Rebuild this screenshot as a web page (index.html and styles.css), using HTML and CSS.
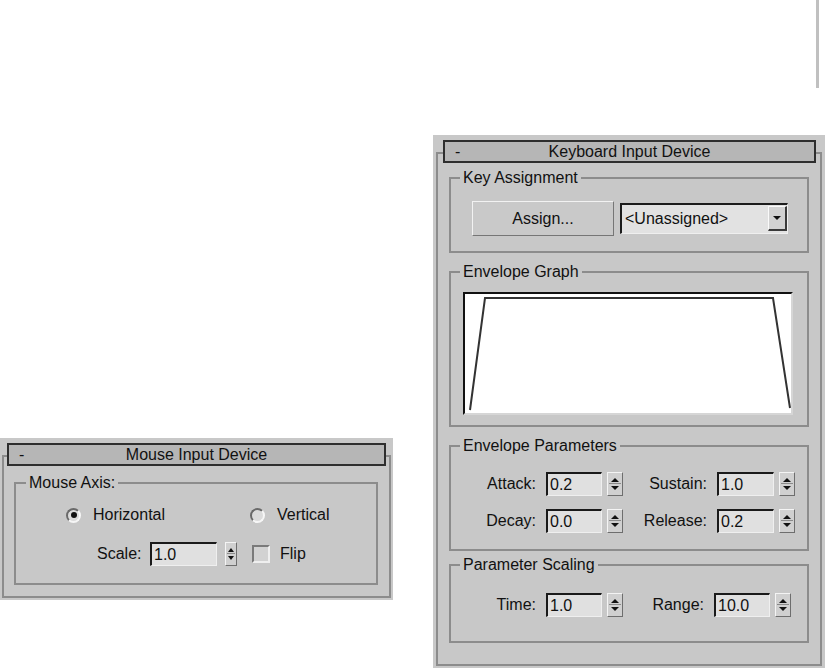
FILE: index.html
```html
<!DOCTYPE html>
<html>
<head>
<meta charset="utf-8">
<title>Input Devices</title>
<link rel="stylesheet" href="styles.css">
</head>
<body>
<div class="desk">
  <div class="edge"></div>

  <section class="rollout kb">
    <div class="frame">
      <div class="head"><span class="dash">-</span><span class="title">Keyboard Input Device</span><span></span></div>

      <fieldset class="group g-key">
        <legend>Key Assignment</legend>
        <div class="key-row">
          <div class="btn">Assign...</div>
          <div class="combo"><span class="combo-text">&lt;Unassigned&gt;</span><span class="combo-arrow"><i class="tri-down"></i></span></div>
        </div>
      </fieldset>

      <fieldset class="group g-graph">
        <legend>Envelope Graph</legend>
        <div class="graph">
          <svg class="graph-svg" width="326" height="119"><polyline points="5,116 20,4 308,4 325,114" fill="none" stroke="#333" stroke-width="2"/></svg>
        </div>
      </fieldset>

      <fieldset class="group g-params">
        <legend>Envelope Parameters</legend>
        <div class="params">
          <div class="prow">
            <div class="param"><span class="lbl">Attack:</span><span class="field">0.2</span><span class="spin"><i class="tri-up"></i><i class="tri-down"></i></span></div>
            <div class="param"><span class="lbl">Sustain:</span><span class="field wide">1.0</span><span class="spin"><i class="tri-up"></i><i class="tri-down"></i></span></div>
          </div>
          <div class="prow">
            <div class="param"><span class="lbl">Decay:</span><span class="field">0.0</span><span class="spin"><i class="tri-up"></i><i class="tri-down"></i></span></div>
            <div class="param"><span class="lbl">Release:</span><span class="field wide">0.2</span><span class="spin"><i class="tri-up"></i><i class="tri-down"></i></span></div>
          </div>
        </div>
      </fieldset>

      <fieldset class="group g-scale">
        <legend>Parameter Scaling</legend>
        <div class="params scale">
          <div class="prow">
            <div class="param"><span class="lbl">Time:</span><span class="field">1.0</span><span class="spin"><i class="tri-up"></i><i class="tri-down"></i></span></div>
            <div class="param"><span class="lbl">Range:</span><span class="field">10.0</span><span class="spin"><i class="tri-up"></i><i class="tri-down"></i></span></div>
          </div>
        </div>
      </fieldset>
    </div>
  </section>

  <section class="rollout mouse">
    <div class="frame">
      <div class="head"><span class="dash">-</span><span class="title">Mouse Input Device</span><span></span></div>
      <fieldset class="group g-axis">
        <legend>Mouse Axis:</legend>
        <div class="axis-row">
          <label class="opt"><span class="radio on"></span><span>Horizontal</span></label>
          <label class="opt"><span class="radio"></span><span>Vertical</span></label>
        </div>
        <div class="scale-row">
          <span class="slbl">Scale:</span><span class="field sfield">1.0</span><span class="spin small"><i class="tri-up"></i><i class="tri-down"></i></span>
          <span class="check"></span><span class="flip">Flip</span>
        </div>
      </fieldset>
    </div>
  </section>
</div>
</body>
</html>
```
FILE: styles.css
```css
* { box-sizing: border-box; }

body {
  margin: 0;
  background: #fff;
  font-family: "Liberation Sans", Arial, sans-serif;
  font-size: 16px;
  color: #111;
}

.desk {
  position: relative;
  width: 825px;
  height: 671px;
  overflow: hidden;
}

.edge {
  position: absolute;
  left: 816px;
  top: 0;
  width: 3px;
  height: 88px;
  background: #c0c0c0;
}

.rollout {
  position: absolute;
  background: #c8c8c8;
}

.kb {
  left: 433px;
  top: 135px;
  width: 392px;
  height: 533px;
  padding: 17px 3px 2px 3px;
}

.mouse {
  left: 0;
  top: 438px;
  width: 393px;
  height: 162px;
  padding: 17px 2px 2px 2px;
}

.frame {
  border: 2px solid #8c8c8c;
  height: 100%;
}

.head {
  height: 23px;
  margin: -14px 4px 0 5px;
  background: #b6b6b6;
  border: 2px solid #2e2e2e;
  display: grid;
  grid-template-columns: 1fr auto 1fr;
  align-items: center;
  line-height: 19px;
}

.mouse .head { margin: -14px 3px 0 3px; }

.dash { padding-left: 10px; }

.group {
  margin: 0 11px;
  border: 2px solid #8c8c8c;
  padding: 0;
  min-width: 0;
}

.group legend {
  padding: 0 3px;
  margin-left: 9px;
  line-height: 18px;
  height: 18px;
}

/* Key assignment */
.g-key { margin-top: 6px; }

.key-row {
  display: flex;
  align-items: flex-start;
  gap: 6px;
  padding: 14px 0 15px 21px;
}

.btn {
  width: 142px;
  height: 35px;
  border: 1px solid;
  border-color: #f2f2f2 #767676 #767676 #f2f2f2;
  background: #c9c9c9;
  display: flex;
  align-items: center;
  justify-content: center;
}

.combo {
  margin-top: 2px;
  width: 168px;
  height: 31px;
  background: #e2e2e2;
  border-style: solid;
  border-width: 2px 1px 1px 2px;
  border-color: #1c1c1c #efefef #efefef #1c1c1c;
  display: flex;
  align-items: flex-start;
}

.combo-text {
  flex: 1;
  padding-left: 3px;
  line-height: 27px;
}

.combo-arrow {
  margin-top: 1px;
  width: 19px;
  height: 25px;
  background: #d2d2d2;
  border-style: solid;
  border-width: 1px 2px 2px 1px;
  border-color: #fafafa #3a3a3a #3a3a3a #fafafa;
  display: flex;
  align-items: center;
  justify-content: center;
}

.tri-up, .tri-down {
  display: block;
  width: 0;
  height: 0;
  border-left: 4px solid transparent;
  border-right: 4px solid transparent;
}
.tri-up { border-bottom: 4px solid #111; }
.tri-down { border-top: 4px solid #111; }

/* Graph */
.g-graph { margin-top: 10px; }

.graph {
  margin: 11px 14px 10px 12px;
  height: 123px;
  background: #fff;
  border: 2px solid;
  border-color: #111 #d6d6d6 #d6d6d6 #111;
}

.graph-svg { display: block; }

/* Parameters */
.g-params { margin-top: 10px; }
.g-scale { margin-top: 5px; }

.params {
  display: flex;
  flex-direction: column;
  gap: 13px;
  padding: 17px 0 16px 15px;
}

.params.scale { padding: 19px 0 24px 15px; }

.prow { display: flex; align-items: center; }

.param { display: flex; align-items: center; }
.param + .param { margin-left: 14px; }
.scale .param + .param { margin-left: 11px; }

.lbl {
  width: 70px;
  text-align: right;
  margin-right: 10px;
}

.field {
  width: 56px;
  height: 24px;
  background: #e0e0e0;
  border-style: solid;
  border-width: 2px 1px 1px 2px;
  border-color: #1a1a1a #efefef #efefef #1a1a1a;
  padding-left: 2px;
  line-height: 21px;
}
.field.wide { width: 57px; }

.spin {
  width: 16px;
  height: 24px;
  margin-left: 5px;
  background: #d0d0d0;
  border: 1px solid;
  border-color: #f4f4f4 #6e6e6e #6e6e6e #f4f4f4;
  display: flex;
  flex-direction: column;
  align-items: center;
  justify-content: space-evenly;
  position: relative;
}

.spin::after {
  content: "";
  position: absolute;
  left: 1px;
  right: 1px;
  top: 10px;
  height: 1px;
  background: #8a8a8a;
}

/* Mouse */
.g-axis {
  margin: 8px 11px 0 10px;
}
.g-axis legend { margin-left: 10px; }

.axis-row {
  display: grid;
  grid-template-columns: 184px auto;
  padding: 14px 0 0 50px;
  height: 32px;
  align-items: start;
}

.opt {
  display: flex;
  align-items: center;
  gap: 12px;
  height: 18px;
}

.radio {
  flex: none;
  width: 15px;
  height: 15px;
  border-radius: 50%;
  border: 2px solid;
  border-color: #6a6a6a #f6f6f6 #f6f6f6 #6a6a6a;
  background: #dcdcdc;
  display: flex;
  align-items: center;
  justify-content: center;
}

.radio.on::after {
  content: "";
  width: 6px;
  height: 6px;
  border-radius: 50%;
  background: #111;
}

.scale-row {
  display: flex;
  align-items: center;
  padding: 18px 0 17px 81px;
}

.slbl { margin-right: 8px; width: 45px; }

.sfield { width: 67px; }

.spin.small {
  width: 12px;
  margin-left: 8px;
}
.spin.small .tri-up, .spin.small .tri-down {
  border-left-width: 3px;
  border-right-width: 3px;
}

.check {
  width: 18px;
  height: 18px;
  margin-left: 15px;
  background: #d2d2d2;
  border: 2px solid;
  border-color: #7a7a7a #efefef #efefef #7a7a7a;
}

.flip { margin-left: 10px; }
```
